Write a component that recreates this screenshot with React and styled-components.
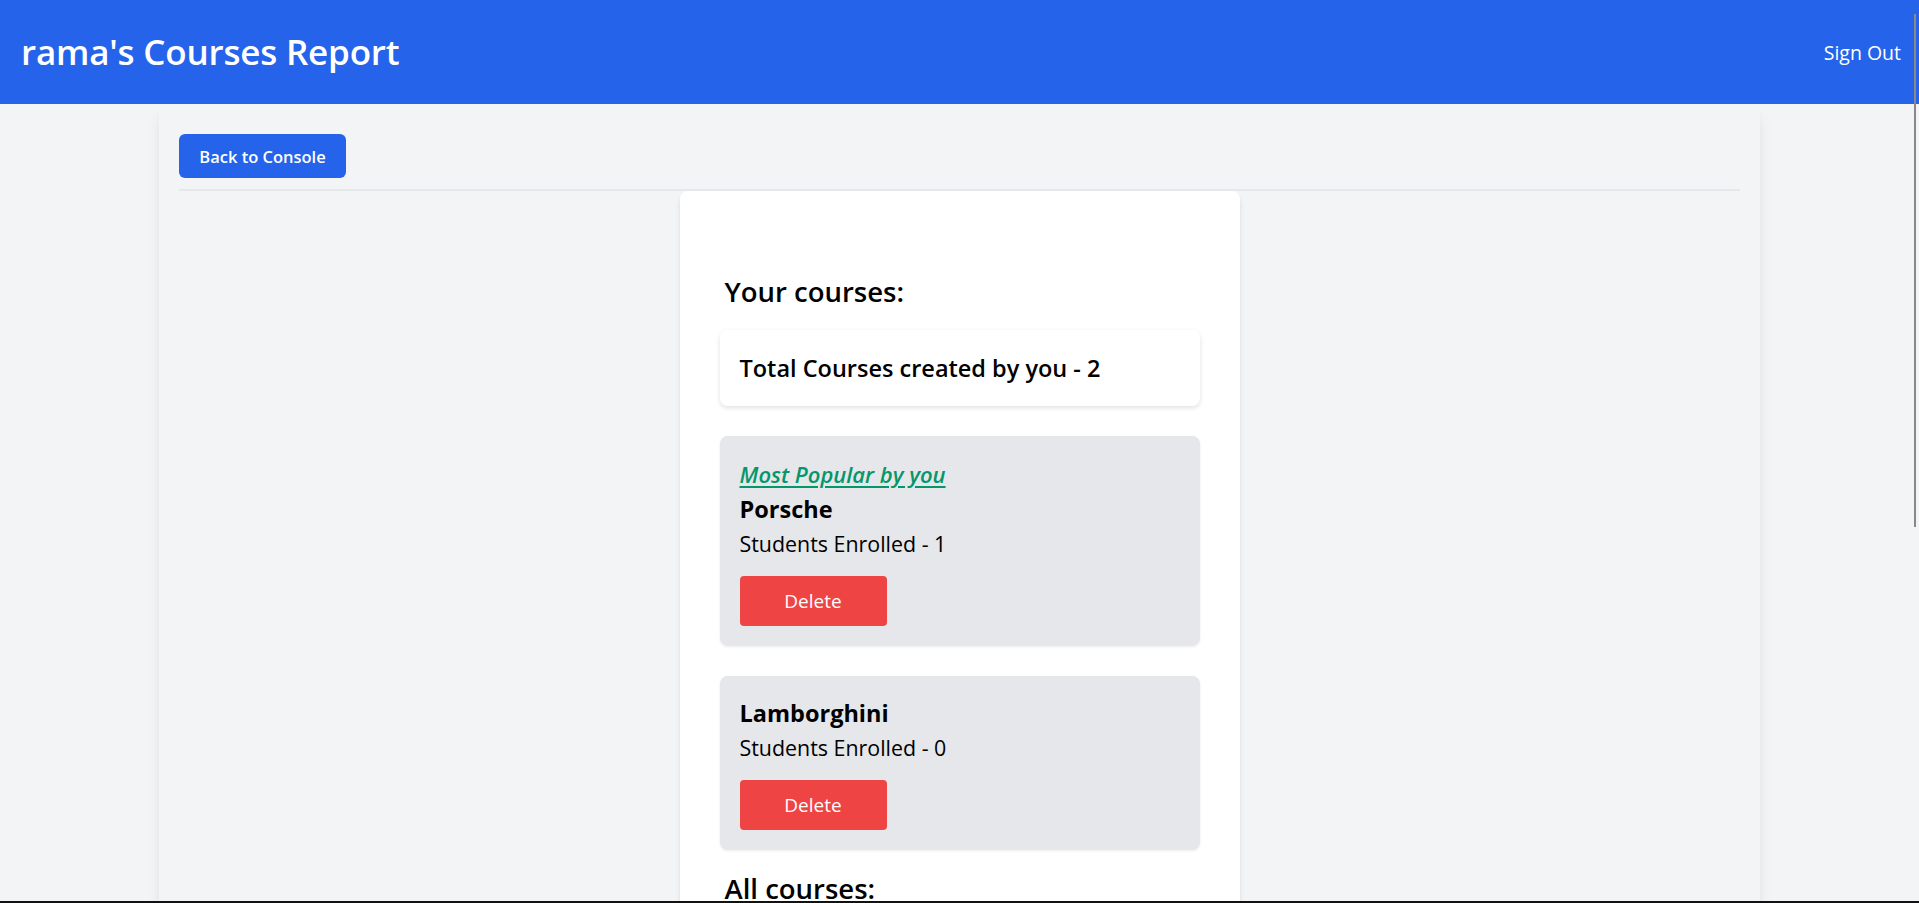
import React from "react";
import styled, { createGlobalStyle } from "styled-components";

const courses = [
  { id: 1, title: "Porsche", students: 1, popular: true },
  { id: 2, title: "Lamborghini", students: 0, popular: false },
];

const GlobalStyle = createGlobalStyle`
  html, body {
    margin: 0;
    padding: 0;
  }
  body {
    font-family: "Open Sans", "Noto Sans", sans-serif;
    background: #f3f4f6;
    color: #000;
  }
  * {
    box-sizing: border-box;
  }
`;

const Header = styled.header`
  height: 104px;
  background: #2563eb;
  color: #fff;
  display: flex;
  align-items: center;
  justify-content: space-between;
  padding: 0 18px 0 21px;
`;

const Title = styled.h1`
  margin: 0;
  font-size: 35px;
  line-height: 40px;
  font-weight: 600;
  letter-spacing: -0.2px;
`;

const SignOut = styled.button`
  background: none;
  border: none;
  color: #fff;
  font-family: inherit;
  font-size: 19.5px;
  padding: 0;
  cursor: pointer;
`;

const Page = styled.main`
  width: 1601px;
  min-height: 1486px;
  margin: 0 auto;
  padding: 0 20px 20px;
  background: #f3f4f6;
  box-shadow: 0 10px 15px -3px rgba(0, 0, 0, 0.1), 0 4px 6px -4px rgba(0, 0, 0, 0.1);
`;

const Toolbar = styled.div`
  display: flex;
  padding: 30px 0 11px;
  border-bottom: 2px solid #e5e7eb;
`;

const BackButton = styled.button`
  height: 44px;
  width: 167px;
  border: none;
  border-radius: 6px;
  background: #2563eb;
  color: #fff;
  font-family: inherit;
  font-size: 16.5px;
  font-weight: 600;
  cursor: pointer;
`;

const ReportCard = styled.section`
  width: 560px;
  margin: 0 auto;
  padding: 40px;
  background: #fff;
  border-radius: 8px;
  box-shadow: 0 4px 6px -1px rgba(0, 0, 0, 0.1), 0 2px 4px -2px rgba(0, 0, 0, 0.1);
`;

const SectionTitle = styled.h2`
  margin: ${(p) => p.$top || 0}px 0 ${(p) => p.$bottom || 0}px 5px;
  font-size: 27.5px;
  line-height: 36px;
  font-weight: 600;
`;

const TotalBox = styled.div`
  padding: 24px 20px;
  margin-bottom: 30px;
  background: #fff;
  border-radius: 8px;
  box-shadow: 0 2px 5px rgba(0, 0, 0, 0.12);
  font-size: 23.5px;
  line-height: 28px;
  font-weight: 600;
`;

const CourseCard = styled.div`
  display: flex;
  flex-direction: column;
  align-items: flex-start;
  padding: 21px 20px 20px;
  margin-bottom: 30px;
  background: #e5e7eb;
  border-radius: 8px;
  box-shadow: 0 1px 3px rgba(0, 0, 0, 0.08);

  &:last-of-type {
    margin-bottom: 21px;
  }
`;

const Badge = styled.a`
  margin: 3px 0 5px;
  color: #059669;
  font-size: 22px;
  line-height: 28px;
  font-weight: 600;
  font-style: italic;
  text-decoration: underline;
  text-underline-offset: 3px;
`;

const CourseName = styled.h3`
  margin: 0 0 5px;
  font-size: 23.5px;
  line-height: 32px;
  font-weight: 700;
`;

const Enrolled = styled.p`
  margin: 0 0 18px;
  font-size: 21.4px;
  line-height: 28px;
`;

const DeleteButton = styled.button`
  width: 147px;
  height: 50px;
  border: none;
  border-radius: 4px;
  background: #ef4444;
  color: #fff;
  font-family: inherit;
  font-size: 19px;
  cursor: pointer;
`;

const ScrollThumb = styled.div`
  position: fixed;
  top: 14px;
  right: 3px;
  width: 2px;
  height: 513px;
  background: #888;
`;

const BottomEdge = styled.div`
  position: fixed;
  left: 0;
  right: 0;
  bottom: 0;
  height: 2px;
  background: #111;
`;

export default function App() {
  return (
    <>
      <GlobalStyle />
      <Header>
        <Title>rama's Courses Report</Title>
        <SignOut>Sign Out</SignOut>
      </Header>
      <Page>
        <Toolbar>
          <BackButton>Back to Console</BackButton>
        </Toolbar>
        <ReportCard>
          <SectionTitle $top={43} $bottom={20}>
            Your courses:
          </SectionTitle>
          <TotalBox>Total Courses created by you - {courses.length}</TotalBox>
          {courses.map((course) => (
            <CourseCard key={course.id}>
              {course.popular && <Badge>Most Popular by you</Badge>}
              <CourseName>{course.title}</CourseName>
              <Enrolled>Students Enrolled - {course.students}</Enrolled>
              <DeleteButton>Delete</DeleteButton>
            </CourseCard>
          ))}
          <SectionTitle>All courses:</SectionTitle>
        </ReportCard>
      </Page>
      <ScrollThumb />
      <BottomEdge />
    </>
  );
}
